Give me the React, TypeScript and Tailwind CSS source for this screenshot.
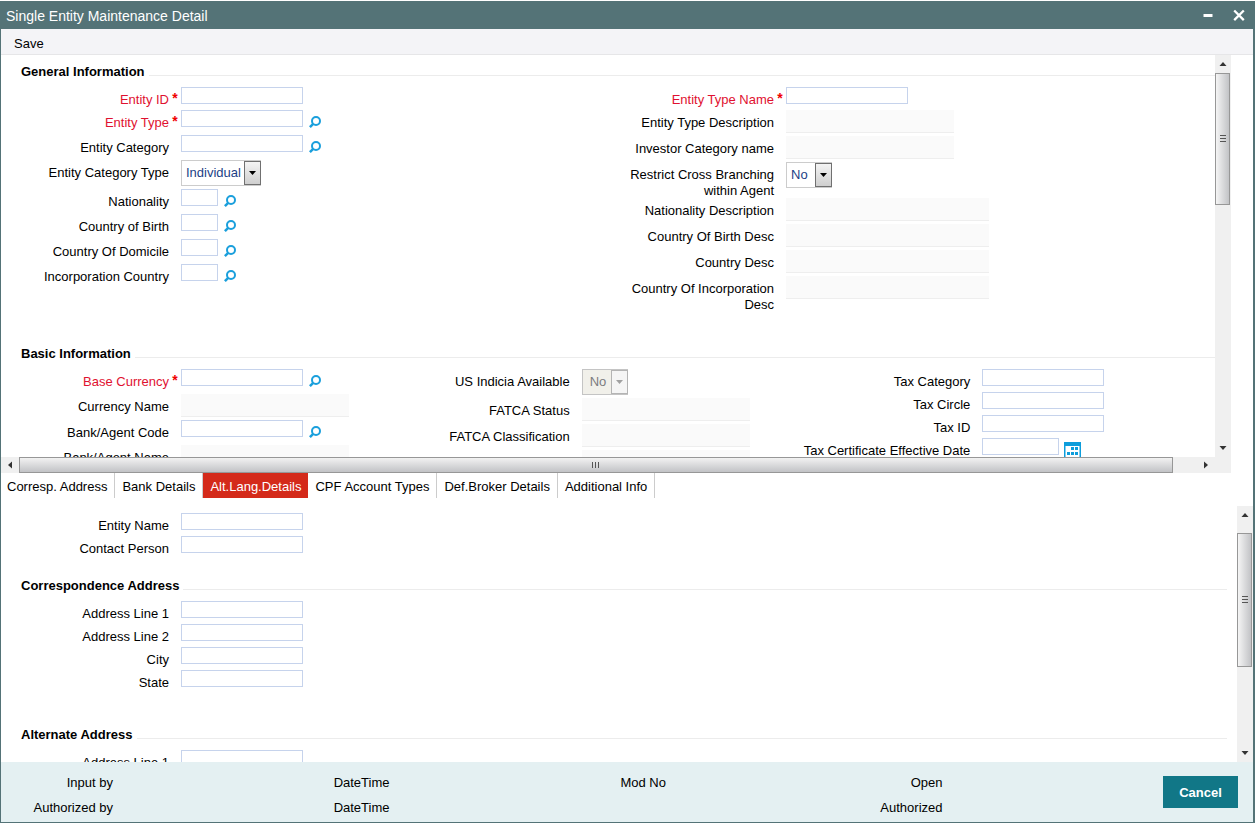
import { useId } from "react";
import type { ReactNode } from "react";
import clsx from "clsx";

const SearchIcon = () => (
  <svg viewBox="0 0 12 12" className="w-3 h-3" fill="none" stroke="#1a9fdc" aria-hidden="true">
    <circle cx="7" cy="5" r="4" strokeWidth="2" />
    <path d="M4.2 7.8 .9 11.1" strokeWidth="2.5" />
  </svg>
);

const CalendarIcon = () => (
  <svg viewBox="0 0 17 17" className="w-[17px] h-[17px]" fill="#0d9ddb" aria-hidden="true">
    <path d="M0 0h17v17H0zM1.5 4v11.5h14V4z" fillRule="evenodd" />
    <path d="M7 5h3v3H7zM11 5h3v3h-3zM3 10h3v3H3zM7 10h3v3H7zM11 10h3v3h-3z" />
  </svg>
);

type FieldKind = "text" | "lookup" | "code" | "date" | "display" | "displayWide" | "select";

interface FieldProps {
  label: string;
  kind?: FieldKind;
  required?: boolean;
  disabled?: boolean;
  options?: string[];
}

const rowHeight: Record<FieldKind, string> = {
  text: "min-h-[23px]",
  date: "min-h-[23px]",
  lookup: "min-h-[25px]",
  code: "min-h-[25px]",
  display: "min-h-[26px]",
  displayWide: "min-h-[26px]",
  select: "min-h-[29px]",
};

const inputStyle: Record<Exclude<FieldKind, "select">, string> = {
  text: "w-[122px] h-[17px] border border-[#c6d3ec] bg-white",
  lookup: "w-[122px] h-[17px] border border-[#c6d3ec] bg-white",
  code: "w-[37px] h-[17px] border border-[#c6d3ec] bg-white",
  date: "w-[77px] h-[17px] border border-[#c6d3ec] bg-white",
  display: "w-[168px] h-[23px] border-b border-[#eeeeee] bg-[#fafafa]",
  displayWide: "w-[203px] h-[23px] border-b border-[#eeeeee] bg-[#fafafa]",
};

const Field = ({ label, kind = "text", required, disabled, options = [] }: FieldProps) => {
  const id = useId();
  return (
    <div className={clsx("flex items-start", rowHeight[kind])}>
      <label
        htmlFor={id}
        className={clsx("w-[168px] shrink-0 pt-[5px] -mb-px text-right", required && "text-[#df1130]")}
      >
        {label}
      </label>
      <span className="w-3 shrink-0 text-center text-sm font-bold leading-[22px] text-[#f00000]" aria-hidden="true">
        {required ? "*" : ""}
      </span>
      {kind === "select" ? (
        <SelectBox id={id} options={options} disabled={disabled} />
      ) : (
        <input
          id={id}
          type="text"
          readOnly={kind === "display" || kind === "displayWide"}
          className={clsx("shrink-0 px-1 outline-none", inputStyle[kind])}
        />
      )}
      {(kind === "lookup" || kind === "code") && (
        <button type="button" aria-label={`Search ${label}`} className="ml-[6px] mt-[6px]">
          <SearchIcon />
        </button>
      )}
      {kind === "date" && (
        <button type="button" aria-label={`Pick ${label}`} className="ml-[5px] mt-1 -mb-2">
          <CalendarIcon />
        </button>
      )}
    </div>
  );
};

interface SelectBoxProps {
  id: string;
  options: string[];
  disabled?: boolean;
}

const SelectBox = ({ id, options, disabled }: SelectBoxProps) => (
  <div className="relative">
    <select
      id={id}
      disabled={disabled}
      className={clsx(
        "block h-[26px] appearance-none border outline-none",
        options[0].length > 3 ? "w-20" : "w-[46px]",
        disabled
          ? "border-[#c4c4c4] bg-[#f1f0ea] pl-[7px] text-[#7c7c80] opacity-100"
          : "border-[#cccccc] bg-white pl-1 text-[#1c3f86]",
      )}
    >
      {options.map((option) => (
        <option key={option}>{option}</option>
      ))}
    </select>
    <span
      className={clsx(
        "pointer-events-none absolute inset-y-px right-0 flex w-[17px] items-center justify-center border",
        disabled
          ? "border-[#b4b4b4] bg-[#f5f5f5] text-[#a0a0a0]"
          : "border-[#707070] bg-gradient-to-b from-[#f4f4f4] to-[#cfcfcf] text-black",
      )}
    >
      <svg viewBox="0 0 7 4" className="h-1 w-[7px]" fill="currentColor" aria-hidden="true">
        <path d="M0 0h7L3.5 4z" />
      </svg>
    </span>
  </div>
);

const SectionTitle = ({ children }: { children: ReactNode }) => (
  <div className="mb-[7px] flex items-end gap-1 pl-5">
    <h2 className="pt-px font-bold">{children}</h2>
    <span className="mb-1 grow border-b border-[#ececec]" />
  </div>
);

interface ScrollBarProps {
  horizontal?: boolean;
  start: number;
  size: number;
}

const ScrollBar = ({ horizontal, start, size }: ScrollBarProps) => (
  <div
    className={clsx("flex shrink-0 bg-[#f0f0f0]", horizontal ? "h-4 flex-row" : "w-4 flex-col")}
    aria-hidden="true"
  >
    <span className={clsx("flex shrink-0 items-center justify-center", horizontal ? "w-[18px]" : "h-[18px]")}>
      <svg viewBox="0 0 8 8" className="h-2 w-2" fill="#333333">
        <path d={horizontal ? "M6 .5v7L2 4z" : "M.5 6h7L4 2z"} />
      </svg>
    </span>
    <div className={clsx("flex min-h-0 min-w-0 grow", horizontal ? "flex-row" : "flex-col")}>
      <span className="shrink-0" style={{ flexBasis: `${start}%` }} />
      <span
        className={clsx(
          "flex shrink-0 items-center justify-center border border-[#979797]",
          horizontal
            ? "bg-gradient-to-b from-[#f2f2f2] to-[#c2c3c6]"
            : "mr-px bg-gradient-to-r from-[#f5f5f5] to-[#c2c3c6]",
        )}
        style={{ flexBasis: `${size}%` }}
      >
        <svg viewBox="0 0 8 8" className="h-2 w-2" stroke="#555555" strokeWidth="1">
          <path d={horizontal ? "M.5 1v6M3.5 1v6M6.5 1v6" : "M1 .5h6M1 3.5h6M1 6.5h6"} />
        </svg>
      </span>
    </div>
    <span className={clsx("flex shrink-0 items-center justify-center", horizontal ? "w-[18px]" : "h-[18px]")}>
      <svg viewBox="0 0 8 8" className="h-2 w-2" fill="#333333">
        <path d={horizontal ? "M2 .5v7L6 4z" : "M.5 2h7L4 6z"} />
      </svg>
    </span>
  </div>
);

const tabs = [
  "Corresp. Address",
  "Bank Details",
  "Alt.Lang.Details",
  "CPF Account Types",
  "Def.Broker Details",
  "Additional Info",
];

const auditFields = [
  ["Input by", "Authorized by"],
  ["DateTime", "DateTime"],
  ["Mod No", ""],
  ["Open", "Authorized"],
];

export default function App() {
  return (
    <div className="h-screen bg-white py-px font-['Liberation_Sans',Arial,sans-serif] text-[13px] leading-4 text-black">
      <div className="flex h-full flex-col border-b border-l border-r-2 border-[#547377]">
        <header className="flex h-7 shrink-0 items-center bg-[#547377] pl-[5px] pr-2 text-white">
          <h1 className="grow pt-[2px] text-sm">Single Entity Maintenance Detail</h1>
          <button type="button" aria-label="Minimize" className="mr-[20px]">
            <svg viewBox="0 0 10 12" className="h-3 w-[10px]" fill="white">
              <path d="M0.5 5h9v3h-9z" />
            </svg>
          </button>
          <button type="button" aria-label="Close">
            <svg viewBox="0 0 12 12" className="h-3 w-3" stroke="white" strokeWidth="2.3">
              <path d="m1.2 1.5 9.6 9.6M10.8 1.5 1.2 11.1" />
            </svg>
          </button>
        </header>

        <div className="flex h-[26px] shrink-0 items-center border-b border-[#e6e6e8] bg-[#f4f4f7] pl-[13px] pt-1">
          <button type="button">Save</button>
        </div>

        {/* Main form */}
        <div className="mr-[22px] flex min-h-0 grow-[418] basis-0 flex-col">
          <div className="flex min-h-0 grow">
            <div className="min-w-0 grow overflow-hidden pt-2">
              <section className="mb-[33px]">
                <SectionTitle>General Information</SectionTitle>
                <div className="grid grid-cols-2 pr-1">
                  <div>
                    <Field label="Entity ID" required />
                    <Field label="Entity Type" kind="lookup" required />
                    <Field label="Entity Category" kind="lookup" />
                    <Field label="Entity Category Type" kind="select" options={["Individual"]} />
                    <Field label="Nationality" kind="code" />
                    <Field label="Country of Birth" kind="code" />
                    <Field label="Country Of Domicile" kind="code" />
                    <Field label="Incorporation Country" kind="code" />
                  </div>
                  <div>
                    <Field label="Entity Type Name" required />
                    <Field label="Entity Type Description" kind="display" />
                    <Field label="Investor Category name" kind="display" />
                    <Field label="Restrict Cross Branching within Agent" kind="select" options={["No"]} />
                    <Field label="Nationality Description" kind="displayWide" />
                    <Field label="Country Of Birth Desc" kind="displayWide" />
                    <Field label="Country Desc" kind="displayWide" />
                    <Field label="Country Of Incorporation Desc" kind="displayWide" />
                  </div>
                </div>
              </section>

              <section>
                <SectionTitle>Basic Information</SectionTitle>
                <div className="grid grid-cols-3 pr-3">
                  <div>
                    <Field label="Base Currency" kind="lookup" required />
                    <Field label="Currency Name" kind="display" />
                    <Field label="Bank/Agent Code" kind="lookup" />
                    <Field label="Bank/Agent Name" kind="display" />
                  </div>
                  <div>
                    <Field label="US Indicia Available" kind="select" options={["No"]} disabled />
                    <Field label="FATCA Status" kind="display" />
                    <Field label="FATCA Classification" kind="display" />
                    <Field label="" kind="display" />
                  </div>
                  <div>
                    <Field label="Tax Category" />
                    <Field label="Tax Circle" />
                    <Field label="Tax ID" />
                    <Field label="Tax Certificate Effective Date" kind="date" />
                  </div>
                </div>
              </section>
            </div>
            <ScrollBar start={0} size={36} />
          </div>
          <div className="flex shrink-0 bg-[#f0f0f0]">
            <div className="flex grow flex-col">
              <ScrollBar horizontal start={0} size={98} />
            </div>
            <span className="w-4" />
          </div>
        </div>

        <nav className="flex h-[25px] shrink-0" role="tablist">
          {tabs.map((tab, i) => {
            const active = tab === "Alt.Lang.Details";
            return (
              <button
                key={tab}
                type="button"
                role="tab"
                aria-selected={active}
                className={clsx(
                  "pr-[7px] pt-[3px]",
                  active ? "bg-[#d42a1a] text-white" : "border-r border-[#cccccc]",
                  i === 0 ? "pl-[6px]" : "pl-[7px]",
                )}
              >
                {tab}
              </button>
            );
          })}
        </nav>

        {/* Active tab */}
        <div className="mt-2 flex min-h-0 grow-[256] basis-0">
          <div className="min-w-0 grow overflow-hidden pr-[10px] pt-[7px]">
            <section className="mb-[18px]">
              <Field label="Entity Name" />
              <Field label="Contact Person" />
            </section>
            <section className="mb-[33px]">
              <SectionTitle>Correspondence Address</SectionTitle>
              <Field label="Address Line 1" />
              <Field label="Address Line 2" />
              <Field label="City" />
              <Field label="State" />
            </section>
            <section>
              <SectionTitle>Alternate Address</SectionTitle>
              <Field label="Address Line 1" />
            </section>
          </div>
          <ScrollBar start={4} size={61} />
        </div>

        <footer className="flex h-[60px] shrink-0 items-start bg-[#e4f0f2] pr-[15px]">
          <dl className="mr-14 grid grow grid-cols-4 pt-[13px]">
            {auditFields.map((column, i) => (
              <div key={i} className="flex w-28 flex-col gap-[9px] text-right">
                {column.map((label, j) => (
                  <dt key={j}>{label}</dt>
                ))}
              </div>
            ))}
          </dl>
          <button type="button" className="mt-[14px] h-8 w-[75px] bg-[#117787] pt-px font-bold text-white">
            Cancel
          </button>
        </footer>
      </div>
    </div>
  );
}
